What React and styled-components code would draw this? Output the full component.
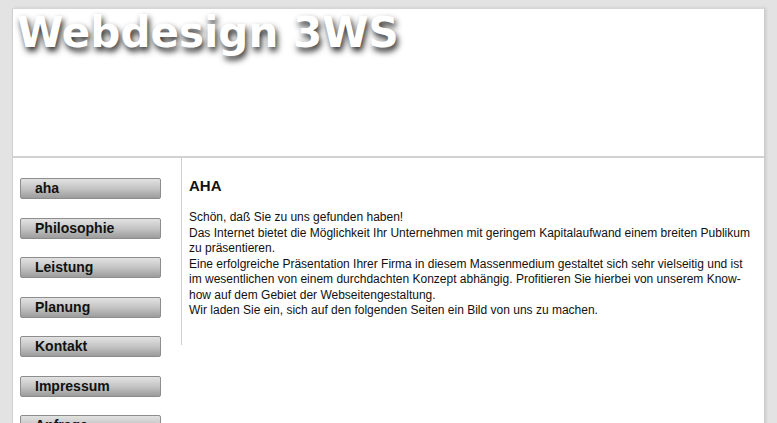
import styled, { createGlobalStyle } from 'styled-components';

const GlobalStyle = createGlobalStyle`
  html, body {
    margin: 0;
    padding: 0;
    background: #e3e3e3;
  }
  body {
    font-family: "Liberation Sans", Arial, sans-serif;
    overflow: hidden;
  }
`

const Page = styled.div`
  padding: 8px 0 0 12px;
  width: 752px;
`

const Frame = styled.div`
  background: #fff;
  border-left: 1px solid #cfcfcf;
  border-top: 1px solid #d6d6d6;
  box-shadow: 2px 0 3px rgba(0, 0, 0, 0.12);
  min-height: 430px;
`

const Header = styled.header`
  height: 147px;
  border-bottom: 2px solid #d2d2d2;
  padding: 0 0 0 4px;
`

const Title = styled.h1`
  margin: 0;
  font-family: "DejaVu Sans", Verdana, sans-serif;
  font-weight: bold;
  font-size: 42px;
  line-height: 48px;
  color: #fff;
  text-shadow: 2px 4px 6px rgba(0, 0, 0, 0.85);
`

const Main = styled.div`
  display: flex;
  align-items: flex-start;
`

const Sidebar = styled.nav`
  width: 168px;
  padding: 20px 0 0 7px;
  box-sizing: border-box;
  display: flex;
  flex-direction: column;
  gap: 18.5px;
`

const NavButton = styled.a`
  display: block;
  width: 141px;
  height: 21px;
  box-sizing: border-box;
  padding-left: 14px;
  border: 1px solid #8d8d8d;
  border-radius: 2px;
  background: linear-gradient(to bottom, #e2e2e2 0%, #c4c4c4 50%, #9c9c9c 100%);
  color: #111;
  font-weight: bold;
  font-size: 14px;
  line-height: 18px;
  text-decoration: none;
  cursor: pointer;
`

const Content = styled.section`
  flex: 1;
  height: 168px;
  border-left: 1px solid #cfcfcf;
  padding: 19px 8px 0 7px;
`

const Heading = styled.h2`
  margin: 0 0 16px;
  font-size: 15px;
  font-weight: bold;
  color: #111;
`

const Text = styled.p`
  margin: 0;
  font-size: 12px;
  line-height: 15.5px;
  color: #111;
`

const links = ['aha', 'Philosophie', 'Leistung', 'Planung', 'Kontakt', 'Impressum', 'Anfrage'];

function App() {
  return (
    <>
      <GlobalStyle />
      <Page>
        <Frame>
          <Header>
            <Title>Webdesign 3WS</Title>
          </Header>
          <Main>
            <Sidebar>
              {links.map((l) => <NavButton key={l}>{l}</NavButton>)}
            </Sidebar>
            <Content>
              <Heading>AHA</Heading>
              <Text>
                Schön, daß Sie zu uns gefunden haben!<br />
                Das Internet bietet die Möglichkeit Ihr Unternehmen mit geringem Kapitalaufwand einem breiten Publikum zu präsentieren.<br />
                Eine erfolgreiche Präsentation Ihrer Firma in diesem Massenmedium gestaltet sich sehr vielseitig und ist im wesentlichen von einem durchdachten Konzept abhängig. Profitieren Sie hierbei von unserem Know-how auf dem Gebiet der Webseitengestaltung.<br />
                Wir laden Sie ein, sich auf den folgenden Seiten ein Bild von uns zu machen.
              </Text>
            </Content>
          </Main>
        </Frame>
      </Page>
    </>
  );
}

export default App;
